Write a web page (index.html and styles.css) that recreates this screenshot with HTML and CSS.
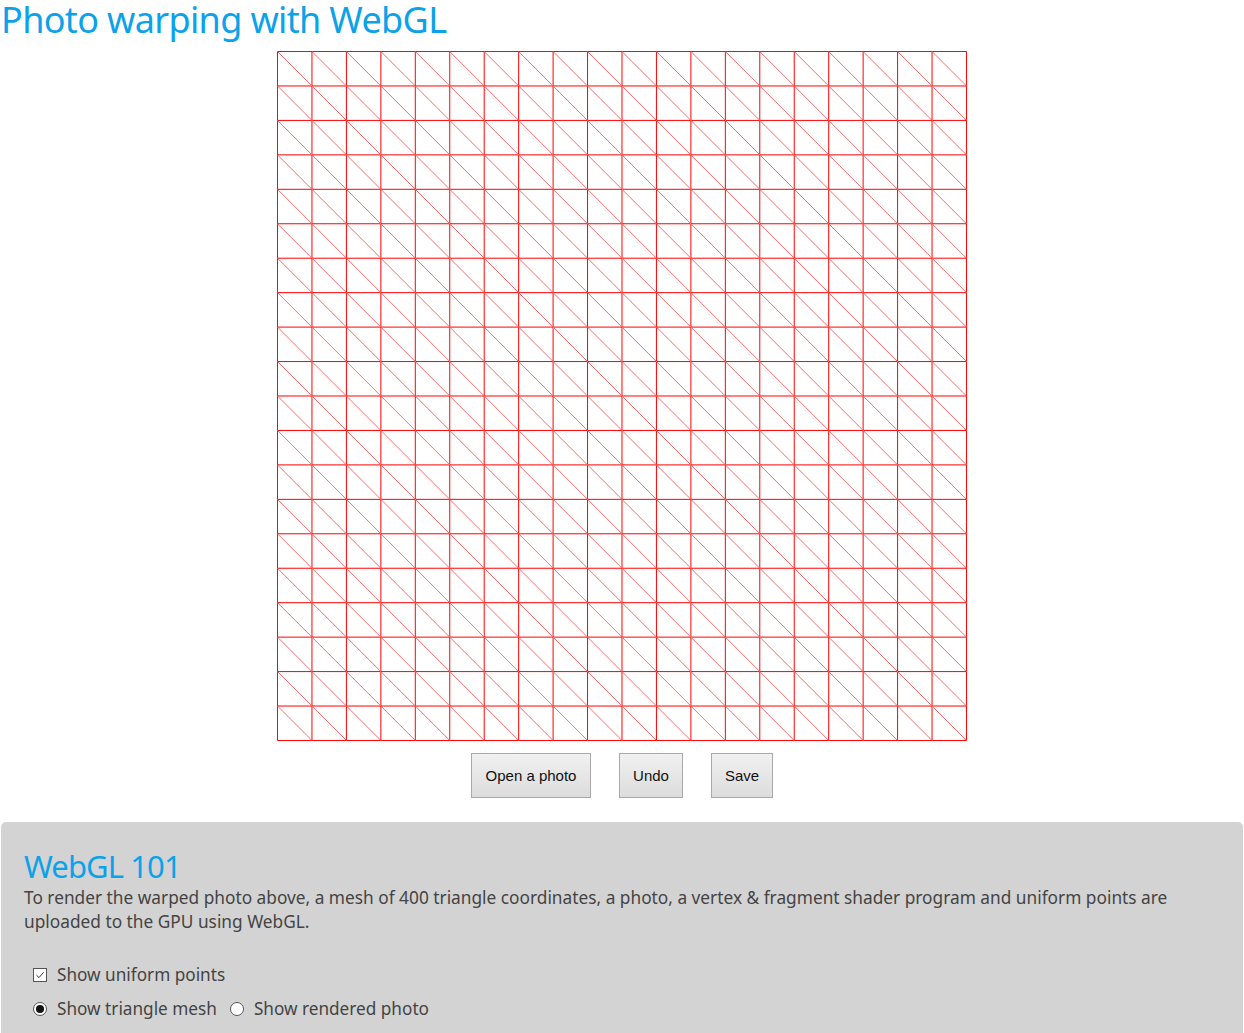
FILE: index.html
```html
<!DOCTYPE html>
<html>
<head>
<meta charset="utf-8">
<title>Photo warping with WebGL</title>
<link rel="stylesheet" href="styles.css">
</head>
<body>
<h1 class="title">Photo warping with WebGL</h1>
<div class="stage">
  <svg class="mesh" width="690" height="690" viewBox="-0.015 -0.015 20.03 20.03">
    <path class="grid" d="M0 0H20M0 1H20M0 2H20M0 3H20M0 4H20M0 5H20M0 6H20M0 7H20M0 8H20M0 9H20M0 10H20M0 11H20M0 12H20M0 13H20M0 14H20M0 15H20M0 16H20M0 17H20M0 18H20M0 19H20M0 20H20M0 0V20M1 0V20M2 0V20M3 0V20M4 0V20M5 0V20M6 0V20M7 0V20M8 0V20M9 0V20M10 0V20M11 0V20M12 0V20M13 0V20M14 0V20M15 0V20M16 0V20M17 0V20M18 0V20M19 0V20M20 0V20"/>
    <path class="diag" d="M0 0L20 20M1 0L20 19M2 0L20 18M3 0L20 17M4 0L20 16M5 0L20 15M6 0L20 14M7 0L20 13M8 0L20 12M9 0L20 11M10 0L20 10M11 0L20 9M12 0L20 8M13 0L20 7M14 0L20 6M15 0L20 5M16 0L20 4M17 0L20 3M18 0L20 2M19 0L20 1M0 1L19 20M0 2L18 20M0 3L17 20M0 4L16 20M0 5L15 20M0 6L14 20M0 7L13 20M0 8L12 20M0 9L11 20M0 10L10 20M0 11L9 20M0 12L8 20M0 13L7 20M0 14L6 20M0 15L5 20M0 16L4 20M0 17L3 20M0 18L2 20M0 19L1 20"/>
  </svg>
</div>
<div class="buttons">
  <button class="btn btn-open">Open a photo</button>
  <button class="btn btn-undo">Undo</button>
  <button class="btn btn-save">Save</button>
</div>
<section class="panel">
  <h2 class="panel-title">WebGL 101</h2>
  <p class="panel-text">To render the warped photo above, a mesh of 400 triangle coordinates, a photo, a vertex &amp; fragment shader program and uniform points are uploaded to the GPU using WebGL.</p>
  <div class="options">
    <label class="opt"><span class="box"><svg width="10" height="10" viewBox="0 0 10 10"><path d="M1.5 5.2L4 7.6L8.6 2.3" fill="none" stroke="#333" stroke-width="1"/></svg></span>Show uniform points</label>
    <div class="row">
      <label class="opt"><span class="radio on"></span>Show triangle mesh</label>
      <label class="opt"><span class="radio"></span>Show rendered photo</label>
    </div>
  </div>
</section>
</body>
</html>
```
FILE: styles.css
```css
html, body {
  margin: 0;
  padding: 0;
  background: #fff;
}
body {
  font-family: "Noto Sans", "Open Sans", sans-serif;
  overflow: hidden;
}
.title {
  margin: 0 0 0 1px;
  font-weight: 400;
  font-size: 36px;
  line-height: 40px;
  height: 51px;
  color: #0ca2ea;
  font-family: "Noto Sans", sans-serif;
  letter-spacing: -0.65px;
}
.stage {
  display: flex;
  justify-content: center;
}
.mesh {
  display: block;
}
.grid, .diag {
  fill: none;
  stroke: #ff0000;
  stroke-width: 1;
  vector-effect: non-scaling-stroke;
}
.diag {
  stroke: #ff6a6a;
}
.buttons {
  display: flex;
  justify-content: center;
  gap: 28px;
  margin-top: 12px;
}
.btn {
  font-family: "Liberation Sans", Arial, sans-serif;
  font-size: 15px;
  color: #111;
  height: 45px;
  padding: 0;
  border: 1px solid #a9a9a9;
  background: linear-gradient(#f1f1f1, #dcdcdc);
  border-radius: 0;
}
.btn-open { width: 120px; }
.btn-undo { width: 64px; }
.btn-save { width: 62px; }
.panel {
  margin: 24px 1px 0 1px;
  background: #d3d3d3;
  border-radius: 5px;
  padding: 24px 23px 20px 23px;
  min-height: 220px;
}
.panel-title {
  margin: 0;
  font-weight: 400;
  font-size: 31px;
  line-height: 40px;
  color: #0ca2ea;
  letter-spacing: -0.9px;
}
.panel-text {
  margin: 0;
  font-size: 17.3px;
  line-height: 24px;
  color: #444;
  letter-spacing: 0;
  max-width: 1170px;
}
.options {
  margin-top: 29px;
  display: flex;
  flex-direction: column;
  gap: 10px;
  padding-left: 9px;
}
.row {
  display: flex;
  gap: 13px;
}
.opt {
  display: flex;
  align-items: center;
  font-size: 17.2px;
  line-height: 24px;
  color: #444;
  letter-spacing: 0;
}
.box {
  width: 12px;
  height: 12px;
  border: 1px solid #555;
  background: #fff;
  margin-right: 10px;
  display: flex;
  align-items: center;
  justify-content: center;
}
.radio {
  width: 12px;
  height: 12px;
  border: 1px solid #555;
  border-radius: 50%;
  background: #fff;
  margin-right: 10px;
  position: relative;
}
.radio.on::after {
  content: "";
  position: absolute;
  left: 2px;
  top: 2px;
  width: 8px;
  height: 8px;
  border-radius: 50%;
  background: #111;
}
```
